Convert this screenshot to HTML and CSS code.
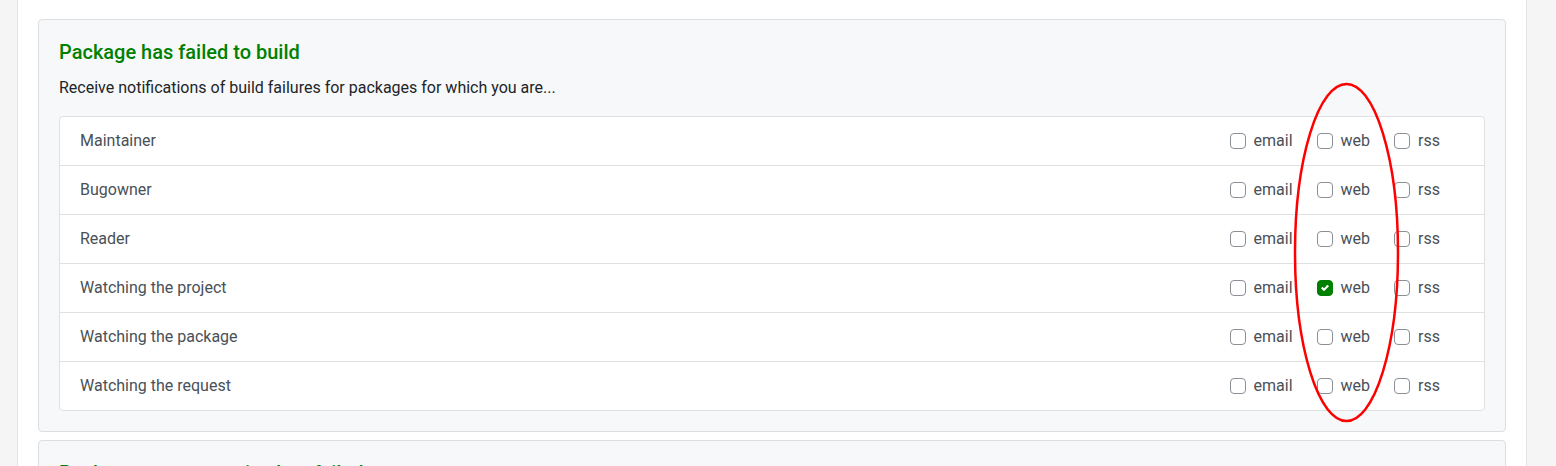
FILE: index.html
```html
<!DOCTYPE html>
<html lang="en">
<head>
<meta charset="utf-8">
<title>Notifications</title>
<link rel="stylesheet" href="styles.css">
</head>
<body>
<div class="page">
  <main class="content">
    <section class="card">
      <h5 class="card-title">Package has failed to build</h5>
      <p class="card-text">Receive notifications of build failures for packages for which you are...</p>
      <ul class="list-group">
        <li class="list-item"><span class="role">Maintainer</span>
          <div class="opts">
            <label class="opt"><span class="box"></span>email</label>
            <label class="opt"><span class="box"></span>web</label>
            <label class="opt"><span class="box"></span>rss</label>
          </div>
        </li>
        <li class="list-item"><span class="role">Bugowner</span>
          <div class="opts">
            <label class="opt"><span class="box"></span>email</label>
            <label class="opt"><span class="box"></span>web</label>
            <label class="opt"><span class="box"></span>rss</label>
          </div>
        </li>
        <li class="list-item"><span class="role">Reader</span>
          <div class="opts">
            <label class="opt"><span class="box"></span>email</label>
            <label class="opt"><span class="box"></span>web</label>
            <label class="opt"><span class="box"></span>rss</label>
          </div>
        </li>
        <li class="list-item"><span class="role">Watching the project</span>
          <div class="opts">
            <label class="opt"><span class="box"></span>email</label>
            <label class="opt"><span class="box checked"><svg viewBox="0 0 8 8" width="8" height="8"><path fill="#fff" d="M6.564.75l-3.59 3.612-1.538-1.55L0 4.26l2.974 2.99L8 2.193z"/></svg></span>web</label>
            <label class="opt"><span class="box"></span>rss</label>
          </div>
        </li>
        <li class="list-item"><span class="role">Watching the package</span>
          <div class="opts">
            <label class="opt"><span class="box"></span>email</label>
            <label class="opt"><span class="box"></span>web</label>
            <label class="opt"><span class="box"></span>rss</label>
          </div>
        </li>
        <li class="list-item"><span class="role">Watching the request</span>
          <div class="opts">
            <label class="opt"><span class="box"></span>email</label>
            <label class="opt"><span class="box"></span>web</label>
            <label class="opt"><span class="box"></span>rss</label>
          </div>
        </li>
      </ul>
    </section>
    <section class="card">
      <h5 class="card-title">Package source service has failed</h5>
      <p class="card-text">Receive notifications of source service failures for packages for which you are...</p>
    </section>
  </main>
</div>
<svg class="annotation" width="107" height="341" viewBox="0 0 107 341">
  <ellipse cx="53.5" cy="170.5" rx="51.5" ry="168.5" fill="none" stroke="#ff0000" stroke-width="2.5"/>
</svg>
</body>
</html>
```
FILE: styles.css
```css
*, *::before, *::after {
  box-sizing: border-box;
}
html, body {
  margin: 0;
  padding: 0;
}
body {
  background: #f5f5f5;
  font-family: Roboto, "Liberation Sans", Arial, sans-serif;
  color: #212529;
  overflow: hidden;
  height: 466px;
}
.page {
  display: flex;
  padding-left: 17px;
}
.content {
  width: 1510px;
  background: #fff;
  border-left: 1px solid #e3e3e3;
  border-right: 1px solid #e3e3e3;
  padding: 19px 20px 0 20px;
  display: flex;
  flex-direction: column;
  gap: 8px;
  min-height: 600px;
}
.card {
  background: #f7f8fa;
  border: 1px solid #dcdee0;
  border-radius: 4px;
  padding: 20px;
}
.card-title {
  margin: 0 0 12px 0;
  font-size: 20px;
  font-weight: 500;
  line-height: 24px;
  color: #008000;
}
.card-text {
  margin: 0 0 16px 0;
  font-size: 16px;
  line-height: 24px;
  color: #212529;
}
.list-group {
  list-style: none;
  margin: 0;
  padding: 0;
  background: #fff;
  border: 1px solid #dee0e2;
  border-radius: 4px;
}
.list-item {
  display: flex;
  align-items: center;
  justify-content: space-between;
  height: 49px;
  padding: 0 20px 1px 20px;
  border-top: 1px solid #dee0e2;
  font-size: 16px;
  color: #495057;
}
.list-item:first-child {
  border-top: none;
  height: 48px;
}
.opts {
  display: flex;
  align-items: center;
}
.opt {
  display: flex;
  align-items: center;
  gap: 8px;
  margin-right: 24px;
  color: #495057;
}
.box {
  width: 16px;
  height: 16px;
  border: 1px solid #8a9096;
  border-radius: 4px;
  background: #fff;
  display: flex;
  align-items: center;
  justify-content: center;
}
.box.checked {
  background: #008000;
  border-color: #008000;
}
.annotation {
  position: absolute;
  left: 1293px;
  top: 82px;
}
```
